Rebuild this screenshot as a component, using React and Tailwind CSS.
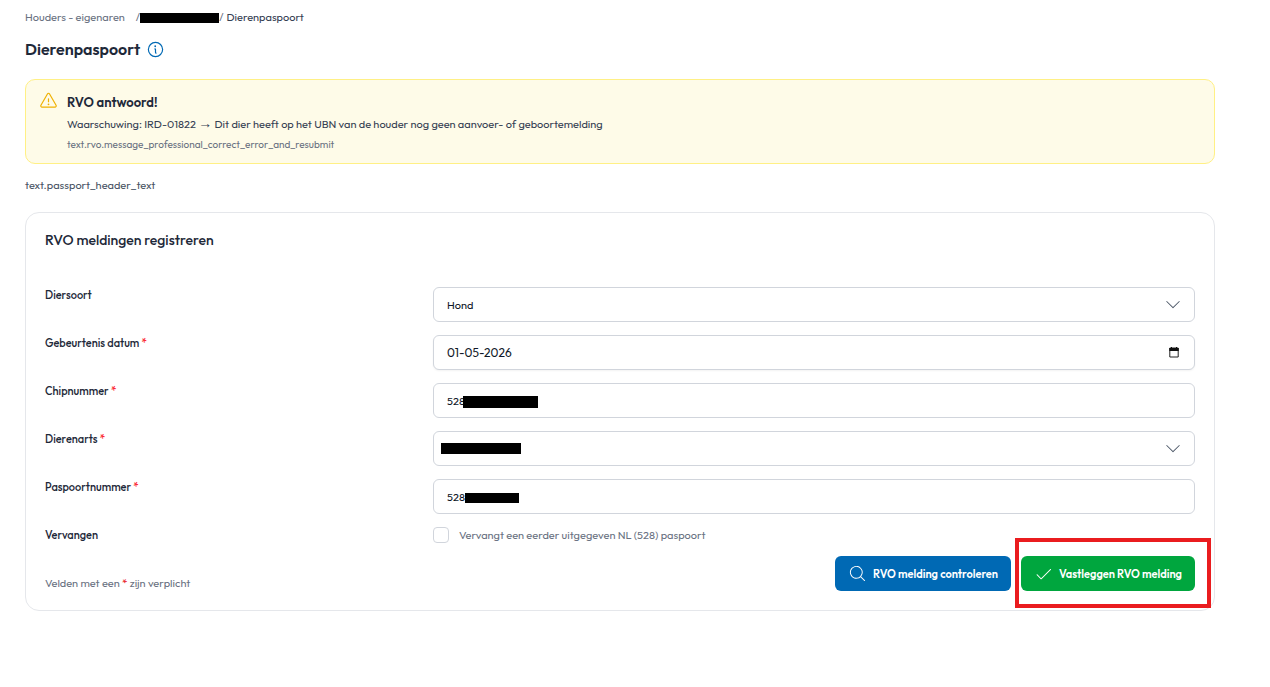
import { useState } from 'react';
import clsx from 'clsx';
import {
  PiCaretDownLight,
  PiCheckLight,
  PiInfo,
  PiMagnifyingGlassLight,
  PiWarning,
} from 'react-icons/pi';

const controlClass =
  'h-[35px] w-full appearance-none rounded-md border border-gray-300 bg-white px-[13px] text-gray-900';

function Redacted({ className }) {
  return <span aria-hidden="true" className={clsx('bg-black', className)} />;
}

function Required() {
  return <span className="text-red-500">*</span>;
}

function Row({ id, label, required, children }) {
  return (
    <div className="grid grid-cols-3 gap-[14px]">
      <label htmlFor={id} className="font-medium text-gray-800">
        {label} {required && <Required />}
      </label>
      <div className="relative col-span-2">{children}</div>
    </div>
  );
}

function Select({ id, value, onChange, options }) {
  return (
    <>
      <select
        id={id}
        value={value}
        onChange={(e) => onChange(e.target.value)}
        className={controlClass}
      >
        {options.map((option) => (
          <option key={option} value={option}>
            {option}
          </option>
        ))}
      </select>
      <PiCaretDownLight className="pointer-events-none absolute top-[7px] right-3 size-5 text-gray-600" />
    </>
  );
}

function CalendarIcon() {
  return (
    <svg viewBox="0 0 10 11" className="h-[11px] w-[10px]" aria-hidden="true">
      <path d="M1 1h8.2v9H.8V1Z" fill="none" stroke="#222" />
      <path d="M.3 1h9.4v3H.3ZM2 0h1v1H2ZM7 0h1v1H7Z" fill="#111" />
    </svg>
  );
}

export default function App() {
  const [species, setSpecies] = useState('Hond');
  const [date, setDate] = useState('01-05-2026');
  const [chip, setChip] = useState('528');
  const [vet, setVet] = useState('');
  const [passport, setPassport] = useState('528');
  const [replaces, setReplaces] = useState(false);

  return (
    <main className="bg-white pt-[9px] pr-[55px] pb-8 pl-[25px] font-['Outfit','Lato',sans-serif] text-[11px] leading-4 text-gray-700">
      <nav aria-label="Breadcrumb" className="flex items-center">
        <a href="#" className="text-gray-500">
          Houders - eigenaren
        </a>
        <span className="ml-[11px] text-gray-500">/</span>
        <Redacted className="mt-[2px] h-[10px] w-[79px]" />
        <span className="text-gray-500">/</span>
        <a href="#" className="ml-[3px] text-gray-700">
          Dierenpaspoort
        </a>
      </nav>

      <div className="mt-[14px] flex items-center gap-[6px]">
        <h1 className="text-[16px] leading-5 font-semibold text-gray-800">Dierenpaspoort</h1>
        <button type="button" aria-label="Info" className="text-[#0069b4]">
          <PiInfo className="size-[19px]" />
        </button>
      </div>

      <section className="mt-5 flex gap-[9px] rounded-[10px] border border-yellow-200 bg-[#fefbe8] px-[13px] pt-[11px] pb-[10px]">
        <PiWarning className="size-[19px] shrink-0 text-yellow-500" />
        <div>
          <h2 className="mt-px text-[13px] leading-5 font-semibold text-gray-800">RVO antwoord!</h2>
          <p className="mt-[2px] leading-5">
            Waarschuwing: IRD-01822{' '}
            <span className="font-['Liberation_Sans',sans-serif] text-[14px] leading-none">→</span>{' '}
            Dit dier heeft op het UBN van de houder nog geen aanvoer- of geboortemelding
          </p>
          <p className="mt-[3px] text-[10px] leading-4 text-gray-500">
            text.rvo.message_professional_correct_error_and_resubmit
          </p>
        </div>
      </section>

      <p className="mt-[13px] text-gray-600">text.passport_header_text</p>

      <section className="mt-[19px] rounded-[14px] border border-gray-200 px-[19px] pt-[17px] pb-[19px]">
        <h2 className="text-[14px] leading-5 font-medium text-gray-800">RVO meldingen registreren</h2>

        <form className="mt-[37px]" onSubmit={(e) => e.preventDefault()}>
          <div className="flex flex-col gap-[13px]">
            <Row id="species" label="Diersoort">
              <Select
                id="species"
                value={species}
                onChange={setSpecies}
                options={['Hond', 'Kat', 'Fret']}
              />
            </Row>
            <Row id="date" label="Gebeurtenis datum" required>
              <input
                id="date"
                value={date}
                onChange={(e) => setDate(e.target.value)}
                className={clsx(controlClass, 'text-[12px] shadow-xs')}
              />
              <button type="button" aria-label="Kalender" className="absolute top-3 right-4">
                <CalendarIcon />
              </button>
            </Row>
            <Row id="chip" label="Chipnummer" required>
              <input
                id="chip"
                value={chip}
                onChange={(e) => setChip(e.target.value)}
                className={controlClass}
              />
              <Redacted className="absolute top-[13px] left-[30px] h-[12px] w-[75px]" />
            </Row>
            <Row id="vet" label="Dierenarts" required>
              <Select id="vet" value={vet} onChange={setVet} options={['']} />
              <Redacted className="absolute top-[12px] left-[8px] h-[11px] w-[80px]" />
            </Row>
            <Row id="passport" label="Paspoortnummer" required>
              <input
                id="passport"
                value={passport}
                onChange={(e) => setPassport(e.target.value)}
                className={controlClass}
              />
              <Redacted className="absolute top-[14px] left-[32px] h-[10px] w-[54px]" />
            </Row>
            <Row id="replaces" label="Vervangen">
              <div className="flex items-center gap-[10px]">
                <input
                  id="replaces"
                  type="checkbox"
                  checked={replaces}
                  onChange={(e) => setReplaces(e.target.checked)}
                  className="size-4 appearance-none rounded border border-gray-300 bg-white checked:bg-[#0069b4]"
                />
                <label htmlFor="replaces" className="text-gray-500">
                  Vervangt een eerder uitgegeven NL (528) paspoort
                </label>
              </div>
            </Row>
          </div>

          <div className="mt-[13px] flex items-end justify-between">
            <p className="text-gray-500">
              Velden met een <span className="text-red-600">*</span> zijn verplicht
            </p>
            <div className="flex gap-[10px] font-semibold text-white">
              <button
                type="button"
                className="flex h-[35px] items-center gap-[6px] rounded-md bg-[#0069b4] px-[13px]"
              >
                <PiMagnifyingGlassLight className="size-[19px]" />
                RVO melding controleren
              </button>
              <div className="relative">
                <button
                  type="submit"
                  className="flex h-[35px] items-center gap-[6px] rounded-md bg-[#00a63e] px-[13px]"
                >
                  <PiCheckLight className="size-[19px]" />
                  Vastleggen RVO melding
                </button>
                <span className="pointer-events-none absolute -top-[18px] -right-4 -bottom-[17px] -left-[6px] border-4 border-[#ea1c1f]" />
              </div>
            </div>
          </div>
        </form>
      </section>
    </main>
  );
}
